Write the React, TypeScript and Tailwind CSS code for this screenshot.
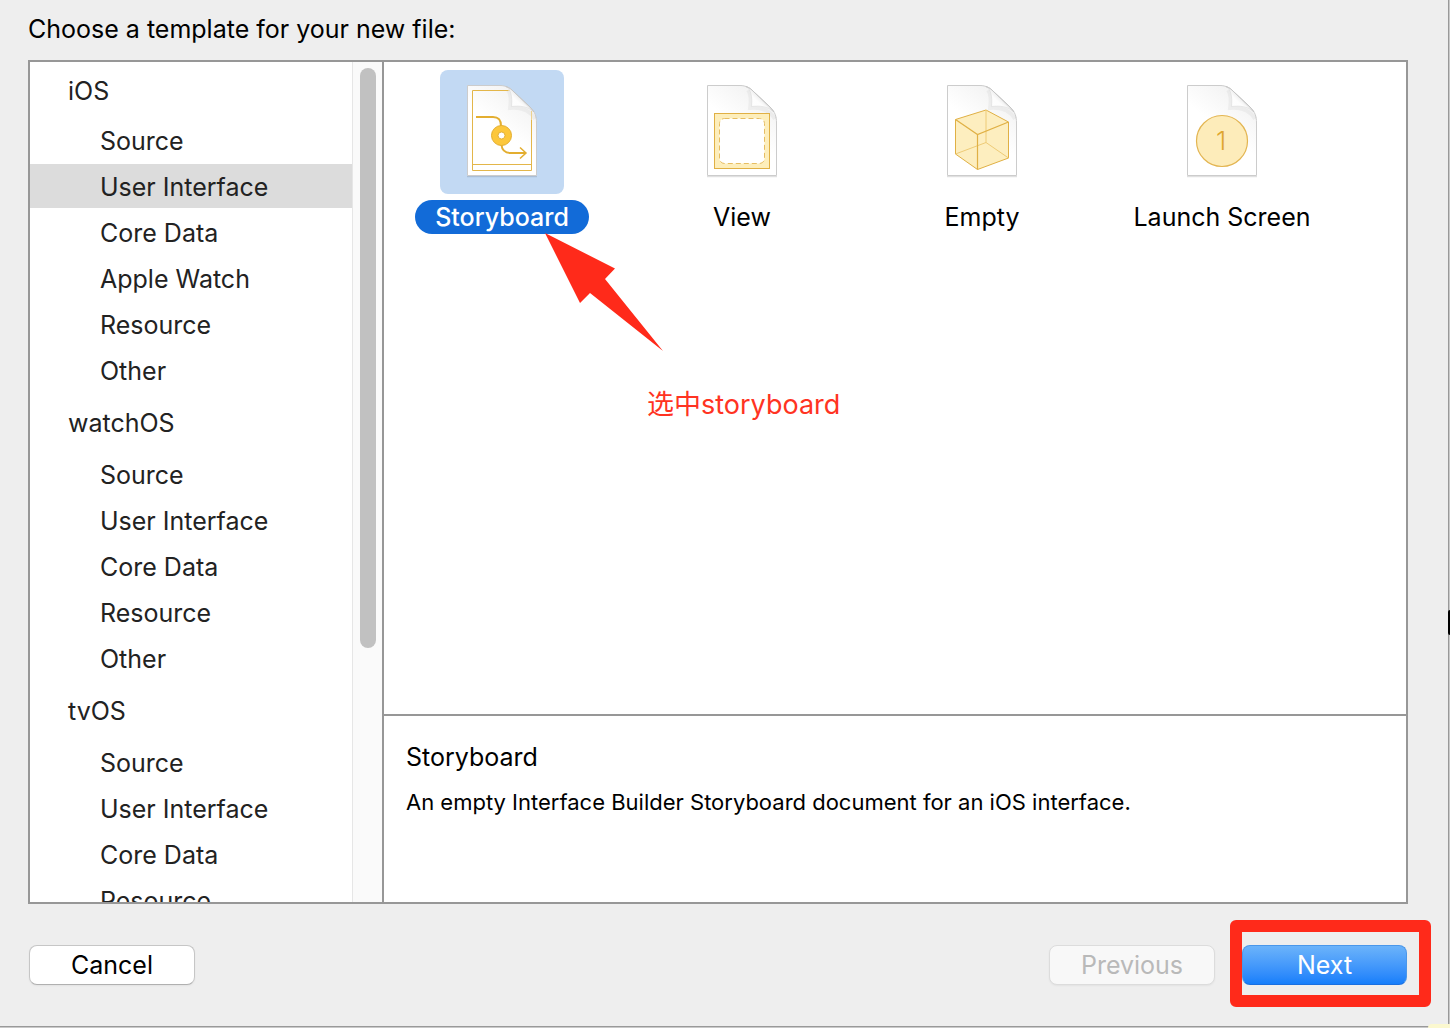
import { useState, type ReactNode } from "react";

type Section = { name: string; items: string[] };

const sections: Section[] = [
  {
    name: "iOS",
    items: ["Source", "User Interface", "Core Data", "Apple Watch", "Resource", "Other"],
  },
  {
    name: "watchOS",
    items: ["Source", "User Interface", "Core Data", "Resource", "Other"],
  },
  {
    name: "tvOS",
    items: ["Source", "User Interface", "Core Data", "Resource"],
  },
];

function FilePage({ id, children }: { id: string; children: ReactNode }) {
  return (
    <svg viewBox="0 0 124 124" className="size-full" aria-hidden="true">
      <defs>
        <linearGradient id={`${id}-paper`} x1="0.2" y1="1" x2="0.8" y2="0">
          <stop offset="0.5" stopColor="#ffffff" />
          <stop offset="1" stopColor="#f0f0f0" />
        </linearGradient>
        <linearGradient id={`${id}-curl`} x1="0" y1="1" x2="0.7" y2="0.3">
          <stop offset="0" stopColor="#ffffff" />
          <stop offset="0.6" stopColor="#fdfdfd" />
          <stop offset="1" stopColor="#dcdcdc" />
        </linearGradient>
      </defs>
      <path d="M27 106.5H97" stroke="#000000" strokeOpacity="0.12" strokeWidth="1.5" />
      <path
        d="M27.5 15.5H60C66 15.5 70 18 74 22L90 37C95 42 96.5 46 96.5 53V105.5H27.5Z"
        fill={`url(#${id}-paper)`}
        stroke="#cccccc"
        strokeWidth="1"
      />
      <path
        d="M68 20C71 24 71 31 70 38C80 37 89 39 95 49"
        fill="none"
        stroke="#000000"
        strokeOpacity="0.04"
        strokeWidth="4"
      />
      {children}
      <path
        d="M66 16.5C71 19 72.5 27 71.5 36.5C80 35.5 88 36.5 93 41.5L74 22C71 19 69 17.5 66 16.5Z"
        fill={`url(#${id}-curl)`}
        stroke="#dadada"
        strokeWidth="0.6"
      />
      <path d="M66 16.5C70 18 71 19 74 22L90 37L94 42" fill="none" stroke="#c4c4c4" />
    </svg>
  );
}

function StoryboardIcon() {
  return (
    <FilePage id="storyboard">
      <path
        d="M32.5 20.5H68M91.5 50V100.5H32.5V20.5M32.5 94.5H91.5"
        fill="none"
        stroke="#e3b64a"
        strokeWidth="1"
      />
      <path d="M68 20.5H71M91.5 41V50" stroke="#ecd28e" strokeWidth="1" />
      <path
        d="M36 47H53C59 47 61 50 61 56M61.5 75C62 80 65 83 71 83H85"
        fill="none"
        stroke="#e3ae30"
        strokeWidth="2"
      />
      <path d="M80 77.5L86 83L80 88.5" fill="none" stroke="#e3ae30" strokeWidth="1.5" />
      <circle cx="61.5" cy="65.5" r="6.8" fill="none" stroke="#fcc73c" strokeWidth="6.5" />
      <circle cx="61.5" cy="65.5" r="10" fill="none" stroke="#e3ae30" strokeWidth="1" />
      <circle cx="61.5" cy="65.5" r="3.5" fill="#ffffff" stroke="#e3ae30" strokeWidth="1" />
    </FilePage>
  );
}

function ViewIcon() {
  return (
    <FilePage id="view">
      <rect x="34.5" y="43.5" width="55" height="55" fill="#fdeebb" stroke="#e0b044" />
      <rect
        x="39.5"
        y="48.5"
        width="45"
        height="45"
        rx="5"
        fill="#ffffff"
        stroke="#e6bd62"
        strokeDasharray="5 3"
      />
    </FilePage>
  );
}

function EmptyIcon() {
  return (
    <FilePage id="empty">
      <path
        d="M66 40L88.5 52V88L57.5 99.5L35.5 84V49.5Z"
        fill="#fdeebf"
        stroke="#e0b044"
        strokeLinejoin="round"
      />
      <path
        d="M35.5 84L66 72.5L88.5 88M66 72.5V40"
        fill="none"
        stroke="#eecb76"
        strokeWidth="1"
      />
      <path
        d="M35.5 49.5L57.5 64.5L88.5 52M57.5 64.5V99.5"
        fill="none"
        stroke="#e0b044"
        strokeWidth="1.2"
      />
    </FilePage>
  );
}

function LaunchScreenIcon() {
  return (
    <FilePage id="launch">
      <circle cx="62" cy="71" r="25.5" fill="#fdecba" stroke="#e3b551" strokeWidth="1.2" />
      <text
        x="61"
        y="80"
        textAnchor="middle"
        fontSize="26"
        fontFamily="Inter, sans-serif"
        fontWeight="300"
        fill="#dfa630"
      >
        1
      </text>
    </FilePage>
  );
}

const templates = [
  { name: "Storyboard", Icon: StoryboardIcon },
  { name: "View", Icon: ViewIcon },
  { name: "Empty", Icon: EmptyIcon },
  { name: "Launch Screen", Icon: LaunchScreenIcon },
];

function Sidebar() {
  const [active, setActive] = useState("iOS/User Interface");
  return (
    <nav className="flex w-[354px] shrink-0 border-r-2 border-[#979797]" aria-label="Categories">
      <div className="flex flex-1 flex-col gap-0.5 overflow-hidden text-[#222222]">
        {sections.map((section) => (
          <section key={section.name} className="group flex shrink-0 flex-col gap-0.5">
            <h2 className="flex h-14 items-center pt-0.5 pl-[38px] group-first:h-[54px] group-first:pt-1">
              {section.name}
            </h2>
            {section.items.map((item) => {
              const key = `${section.name}/${item}`;
              return (
                <button
                  key={key}
                  type="button"
                  onClick={() => setActive(key)}
                  className={
                    key === active
                      ? "h-11 bg-[#dcdcdc] pt-0.5 pl-[70px] text-left"
                      : "h-11 pt-0.5 pl-[70px] text-left"
                  }
                >
                  {item}
                </button>
              );
            })}
          </section>
        ))}
      </div>
      <div className="w-[30px] border-l border-[#e6e6e6] bg-[#fafafa] px-[7px] pt-1.5">
        <div className="h-[580px] w-4 rounded-full bg-[#c1c1c1]" />
      </div>
    </nav>
  );
}

function TemplateGrid() {
  const [selected, setSelected] = useState("Storyboard");
  return (
    <div className="relative flex-1">
      <div className="flex flex-wrap gap-1 pt-2">
        {templates.map(({ name, Icon }) => {
          const on = name === selected;
          return (
            <button
              key={name}
              type="button"
              onClick={() => setSelected(name)}
              className="flex w-[236px] flex-col items-center gap-1.5"
            >
              <span className={on ? "size-[124px] rounded-lg bg-[#c2d9f3]" : "size-[124px]"}>
                <Icon />
              </span>
              <span
                className={
                  on
                    ? "h-[34px] rounded-full bg-[#126bd8] px-5 leading-[34px] font-medium text-white"
                    : "h-[34px] px-5 leading-[34px]"
                }
              >
                {name}
              </span>
            </button>
          );
        })}
      </div>
      <svg
        viewBox="0 0 118 118"
        className="absolute top-[171px] left-[161px] size-[118px]"
        aria-hidden="true"
      >
        <path d="M0 0L70 35.5L60 46L118 118L45 60L35 70Z" fill="#ff2a1a" />
      </svg>
      <p className="absolute top-[325px] left-[263px] text-[27px] leading-9 text-[#ff3322]">
        选中storyboard
      </p>
    </div>
  );
}

export default function App() {
  return (
    <div className="relative flex h-screen flex-col bg-[#c9c9c9] pr-px pb-px font-['Inter','Noto_Sans_CJK_SC',sans-serif] text-[25px] leading-8 text-black">
      <main className="flex min-h-0 flex-1 flex-col border-r border-b border-[#999999] bg-[#eeeeee] pr-10 pl-7">
        <h1 className="flex h-[60px] shrink-0 items-center pb-0.5">
          Choose a template for your new file:
        </h1>
        <div className="flex min-h-0 flex-1 border-2 border-[#979797] bg-white">
          <Sidebar />
          <div className="flex min-w-0 flex-1 flex-col">
            <TemplateGrid />
            <section className="flex h-[188px] flex-col gap-[13px] border-t-2 border-[#979797] px-[22px] pt-[25px]">
              <h2>Storyboard</h2>
              <p className="text-[22px]">
                An empty Interface Builder Storyboard document for an iOS interface.
              </p>
            </section>
          </div>
        </div>
        <footer className="flex shrink-0 items-center px-px py-[41px]">
          <button
            type="button"
            className="h-10 w-[166px] rounded-lg border border-[#c6c6c6] border-b-[#b0b0b0] bg-white shadow-xs"
          >
            Cancel
          </button>
          <button
            type="button"
            disabled
            className="mr-[27px] ml-auto h-10 w-[166px] rounded-lg border border-[#dcdcdc] bg-[#f8f8f8] text-[#b9b9b9] shadow-xs"
          >
            Previous
          </button>
          <div className="relative">
            <button
              type="button"
              className="block h-10 w-[165px] rounded-lg border border-[#4a97ea] border-b-[#1a6fe0] bg-linear-to-b from-[#6bb3fa] to-[#157efb] text-white"
            >
              Next
            </button>
            <div className="pointer-events-none absolute -top-[25px] -right-6 -bottom-[22px] -left-3 rounded-md border-12 border-[#ff2a1a]" />
          </div>
        </footer>
      </main>
      <div className="absolute top-[610px] right-0 h-[25px] w-0.5 rounded-l-full bg-black" />
      <div className="absolute right-0 bottom-0 h-1 w-[22px] rounded-tl-sm bg-[#fbf8cf]" />
    </div>
  );
}
